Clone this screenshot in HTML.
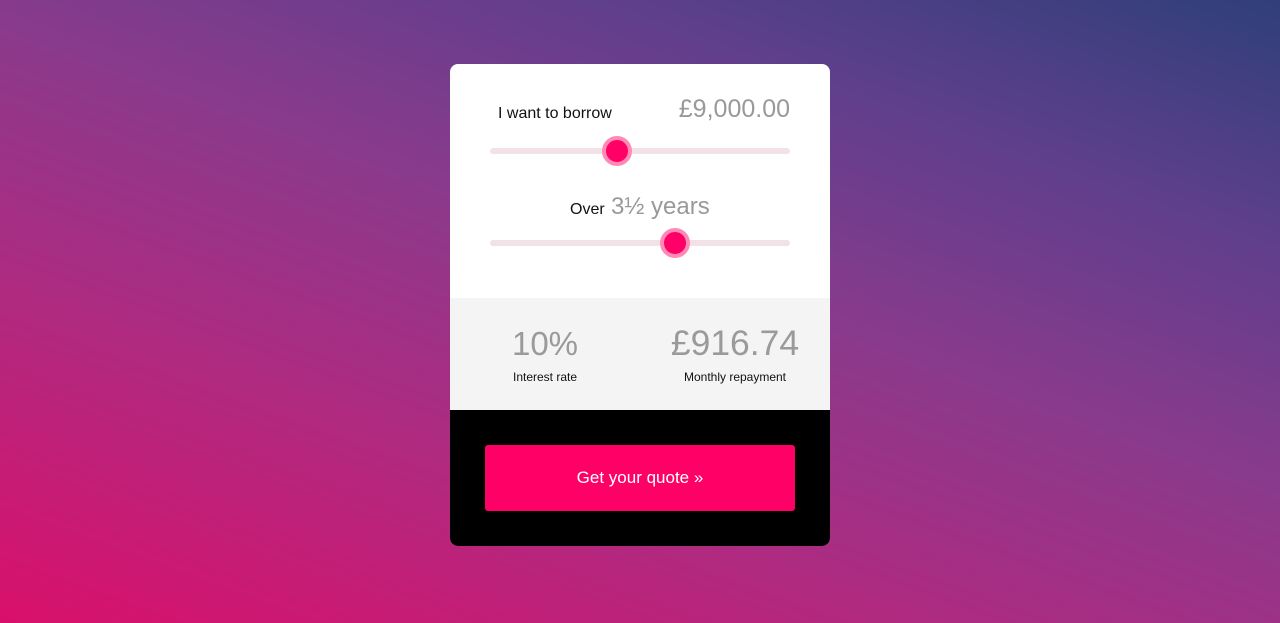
<!DOCTYPE html>
<html><head><meta charset="utf-8"><style>
html,body{margin:0;width:1280px;height:623px;overflow:hidden}
body{background:linear-gradient(20deg,#d9106b 0%,#b02a80 30%,#8a3a8c 55%,#5e3f8c 78%,#2f3f7a 100%);font-family:"Liberation Sans",sans-serif;position:relative}
.card{position:absolute;left:450px;top:64px;width:380px;height:482px;border-radius:8px;overflow:hidden;background:#fff}
.t{position:absolute;white-space:nowrap}
.track{position:absolute;left:40px;width:300px;height:6px;border-radius:3px;background:#f3e1e8}
.thumb{position:absolute;width:22px;height:22px;border-radius:50%;background:#ff0066;border:4px solid #ff8ab5}
.gray{position:absolute;left:0;top:234px;width:380px;height:112px;background:#f4f4f4}
.black{position:absolute;left:0;top:346px;width:380px;height:136px;background:#000}
.btn{position:absolute;left:35px;top:35px;width:310px;height:66px;background:#ff0066;border-radius:3px;color:#fff;font-size:17px;text-align:center;line-height:66px}
</style></head><body>
<div class="card">
<div class="t" style="left:48px;top:41px;font-size:16px;color:#111">I want to borrow</div>
<div class="t" style="right:40px;top:31px;font-size:25px;color:#999">£9,000.00</div>
<div class="track" style="top:84px"></div>
<div class="thumb" style="left:152px;top:72px"></div>
<div class="t" style="left:120px;top:137px;font-size:16px;color:#111">Over</div>
<div class="t" style="left:161px;top:129px;font-size:24px;color:#999">3½ years</div>
<div class="track" style="top:176px"></div>
<div class="thumb" style="left:210px;top:164px"></div>
<div class="gray">
<div class="t" style="left:0;width:190px;text-align:center;top:27px;font-size:33px;color:#9a9a9a">10%</div>
<div class="t" style="left:0;width:190px;text-align:center;top:72px;font-size:12px;color:#111">Interest rate</div>
<div class="t" style="left:190px;width:190px;text-align:center;top:25px;font-size:35.5px;color:#9a9a9a">£916.74</div>
<div class="t" style="left:190px;width:190px;text-align:center;top:72px;font-size:12px;color:#111">Monthly repayment</div>
</div>
<div class="black"><div class="btn">Get your quote »</div></div>
</div>
</body></html>
